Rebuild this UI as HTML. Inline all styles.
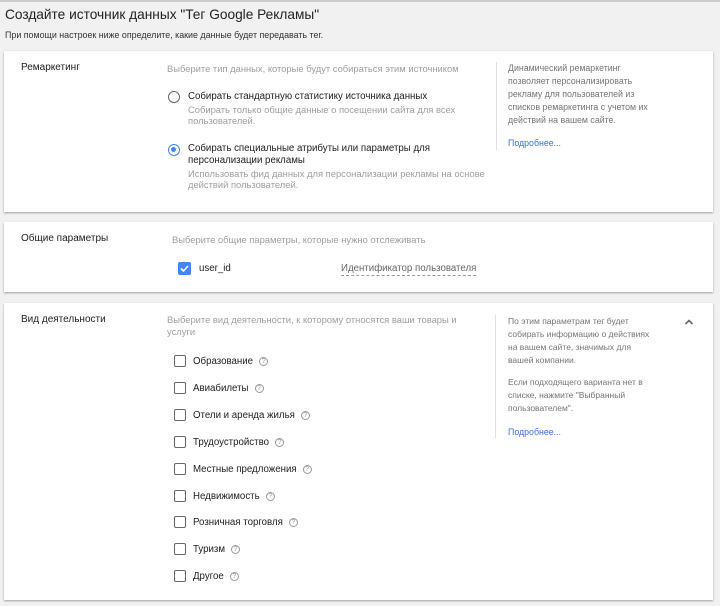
<!DOCTYPE html>
<html><head><meta charset="utf-8"><style>
*{margin:0;padding:0;box-sizing:border-box}
body{width:720px;height:606px;background:#f1f1f1;font-family:"Liberation Sans",sans-serif;color:#212121;position:relative;overflow:hidden;font-size:9.7px}
.a{position:absolute;white-space:nowrap}
.card{position:absolute;left:4px;width:709px;background:#fff;box-shadow:0 1px 2px rgba(0,0,0,.35)}
.g{color:#9e9e9e;font-size:9.4px}
.r{color:#757575;line-height:13px}
.cb{position:absolute;width:12px;height:12px;border:1.5px solid #666;border-radius:2px}
.q{display:inline-block;width:9px;height:9px;border:1px solid #999;border-radius:50%;font-size:7px;line-height:8px;text-align:center;color:#999;margin-left:6px;vertical-align:1px}
.lnk{color:#3b6fd8}
</style></head><body>
<div style="position:absolute;left:0;top:0;width:720px;height:2px;background:#ccc"></div>
<div class="a" style="left:5px;top:7px;font-size:13.7px;color:#222">Создайте источник данных "Тег Google Рекламы"</div>
<div class="a" style="left:5px;top:30px;font-size:8.9px;color:#333">При помощи настроек ниже определите, какие данные будет передавать тег.</div>

<div class="card" style="top:51px;height:161px"></div>
<div class="a" style="left:21px;top:62px;font-size:10px">Ремаркетинг</div>
<div class="a g" style="left:167px;top:63px">Выберите тип данных, которые будут собираться этим источником</div>
<div style="position:absolute;left:168px;top:91px;width:12px;height:12px;border:1.5px solid #666;border-radius:50%"></div>
<div class="a" style="left:188px;top:91px">Собирать стандартную статистику источника данных</div>
<div class="a g" style="left:188px;top:104px;line-height:11px">Собирать только общие данные о посещении сайта для всех<br>пользователей.</div>
<div style="position:absolute;left:168px;top:144px;width:12px;height:12px;border:1.5px solid #4285f4;border-radius:50%"><div style="position:absolute;left:2px;top:2px;width:5px;height:5px;border-radius:50%;background:#4285f4"></div></div>
<div class="a" style="left:188px;top:143px;line-height:12px">Собирать специальные атрибуты или параметры для<br>персонализации рекламы</div>
<div class="a g" style="left:188px;top:168px;line-height:11px">Использовать фид данных для персонализации рекламы на основе<br>действий пользователей.</div>
<div style="position:absolute;left:496px;top:62px;width:1px;height:88px;background:#e0e0e0"></div>
<div class="a r" style="left:508px;top:62px;font-size:8.8px">Динамический ремаркетинг<br>позволяет персонализировать<br>рекламу для пользователей из<br>списков ремаркетинга с учетом их<br>действий на вашем сайте.</div>
<div class="a lnk" style="left:508px;top:138px;font-size:8.8px">Подробнее...</div>

<div class="card" style="top:222px;height:70px"></div>
<div class="a" style="left:21px;top:233px;font-size:10px">Общие параметры</div>
<div class="a g" style="left:172px;top:234px">Выберите общие параметры, которые нужно отслеживать</div>
<div style="position:absolute;left:178px;top:262px;width:13px;height:13px;background:#4285f4;border-radius:2px"><svg width="13" height="13" viewBox="0 0 13 13" style="position:absolute;left:0;top:0"><path d="M3 6.5l2.5 2.5 4.5-5" stroke="#fff" stroke-width="1.6" fill="none"/></svg></div>
<div class="a" style="left:199px;top:263px">user_id</div>
<div class="a" style="left:341px;top:263px;color:#666;border-bottom:1px dashed #999;padding-bottom:1px">Идентификатор пользователя</div>

<div class="card" style="top:303px;height:297px"></div>
<div class="a" style="left:21px;top:314px;font-size:10px">Вид деятельности</div>
<div class="a g" style="left:167px;top:314px;line-height:12px">Выберите вид деятельности, к которому относятся ваши товары и<br>услуги</div>
<div style="position:absolute;left:495px;top:315px;width:1px;height:123px;background:#e0e0e0"></div>
<div class="a r" style="left:508px;top:315px;font-size:8.5px">По этим параметрам тег будет<br>собирать информацию о действиях<br>на вашем сайте, значимых для<br>вашей компании.</div>
<div class="a r" style="left:508px;top:376px;font-size:8.5px">Если подходящего варианта нет в<br>списке, нажмите "Выбранный<br>пользователем".</div>
<div class="a lnk" style="left:508px;top:427px;font-size:8.8px">Подробнее...</div>
<svg style="position:absolute;left:684px;top:318px" width="10" height="8" viewBox="0 0 10 8"><path d="M1.5 6L5 2.5 8.5 6" stroke="#666" stroke-width="1.6" fill="none"/></svg>

<div class="cb" style="left:174px;top:355px"></div><div class="a" style="left:193px;top:356px">Образование<span class="q">?</span></div>
<div class="cb" style="left:174px;top:382px"></div><div class="a" style="left:193px;top:383px">Авиабилеты<span class="q">?</span></div>
<div class="cb" style="left:174px;top:409px"></div><div class="a" style="left:193px;top:410px">Отели и аренда жилья<span class="q">?</span></div>
<div class="cb" style="left:174px;top:436px"></div><div class="a" style="left:193px;top:437px">Трудоустройство<span class="q">?</span></div>
<div class="cb" style="left:174px;top:463px"></div><div class="a" style="left:193px;top:464px">Местные предложения<span class="q">?</span></div>
<div class="cb" style="left:174px;top:490px"></div><div class="a" style="left:193px;top:491px">Недвижимость<span class="q">?</span></div>
<div class="cb" style="left:174px;top:516px"></div><div class="a" style="left:193px;top:517px">Розничная торговля<span class="q">?</span></div>
<div class="cb" style="left:174px;top:543px"></div><div class="a" style="left:193px;top:544px">Туризм<span class="q">?</span></div>
<div class="cb" style="left:174px;top:570px"></div><div class="a" style="left:193px;top:571px">Другое<span class="q">?</span></div>
</body></html>
